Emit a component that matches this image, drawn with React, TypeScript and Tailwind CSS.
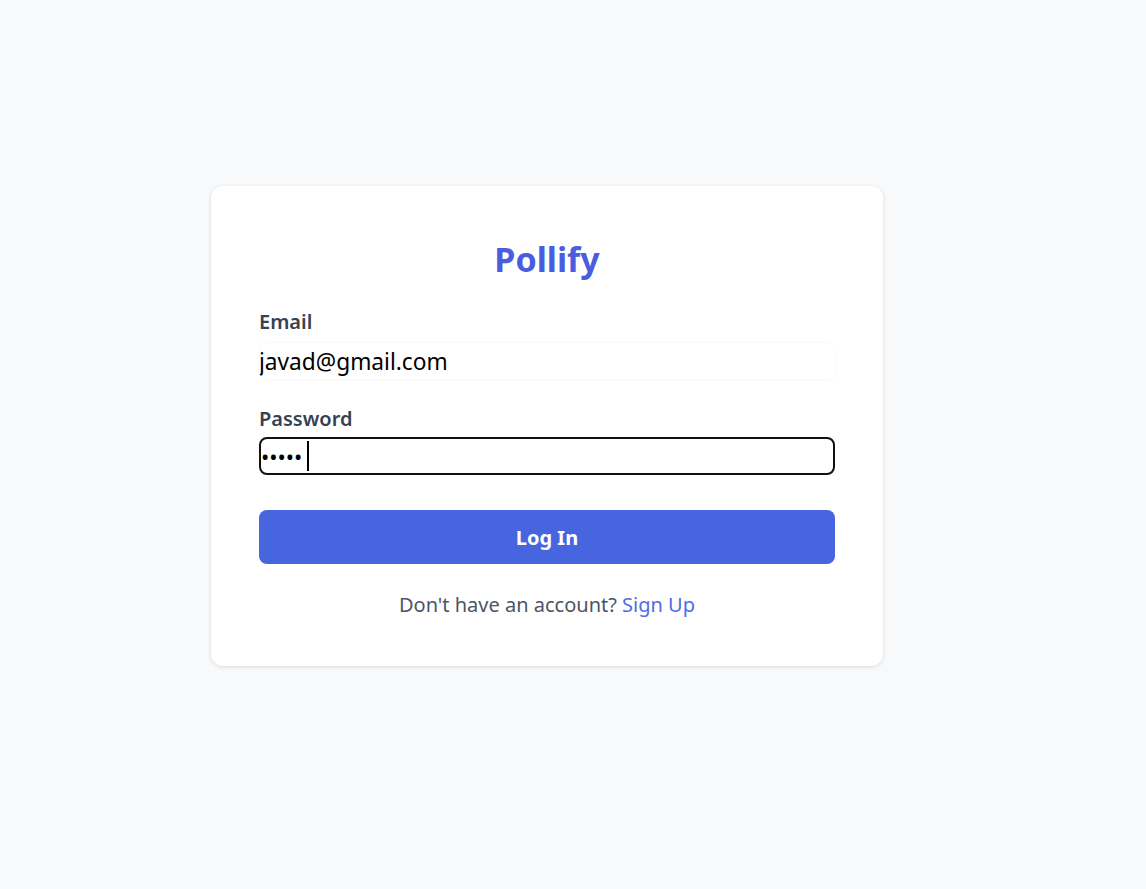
import React from "react";

export default function App() {
  return (
    <div
      className="min-h-[889px] w-full bg-[#f8f9fb] pl-[211px] pt-[186px]"
      style={{ fontFamily: '"Noto Sans", "Open Sans", Arial, sans-serif' }}
    >
      <div className="w-[672px] rounded-xl bg-white px-12 pt-12 pb-[47px] shadow-[0_1px_4px_rgba(0,0,0,0.12)]">
        <h1 className="mt-[4px] text-center text-[34px] font-bold leading-[43px] text-[#4a5de0]">
          Pollify
        </h1>
        <form onSubmit={(e) => e.preventDefault()}>
          <label className="mt-[27px] block text-[20px] font-semibold leading-[28px] text-[#374151]">
            Email
          </label>
          <input
            type="email"
            defaultValue="javad@gmail.com"
            className="mt-[7px] block h-[36px] w-full rounded-lg bg-white p-0 text-[22.7px] text-black shadow-[0_0_3px_rgba(0,0,0,0.06)] outline-none"
          />
          <label className="mt-[26px] block text-[20px] font-semibold leading-[28px] text-[#374151]">
            Password
          </label>
          <div className="relative mt-[4px]">
            <input
              type="password"
              defaultValue="12345"
              readOnly
              className="block h-[38px] w-full rounded-lg border-2 border-[#111] bg-white p-0 text-[22px] text-black outline-none"
            />
            <span className="absolute left-[48px] top-[4px] h-[30px] w-[2px] bg-black" />
          </div>
          <button
            type="submit"
            className="mt-[35px] flex h-[54px] w-full items-center justify-center rounded-lg bg-[#4865e0] pt-[2px] text-[20px] font-bold text-white"
          >
            Log In
          </button>
        </form>
        <p className="mt-[27px] text-center text-[20px] leading-[28px] text-[#4b5563]">
          Don't have an account?{" "}
          <a href="#" className="text-[#4f6ce6]">
            Sign Up
          </a>
        </p>
      </div>
    </div>
  );
}
